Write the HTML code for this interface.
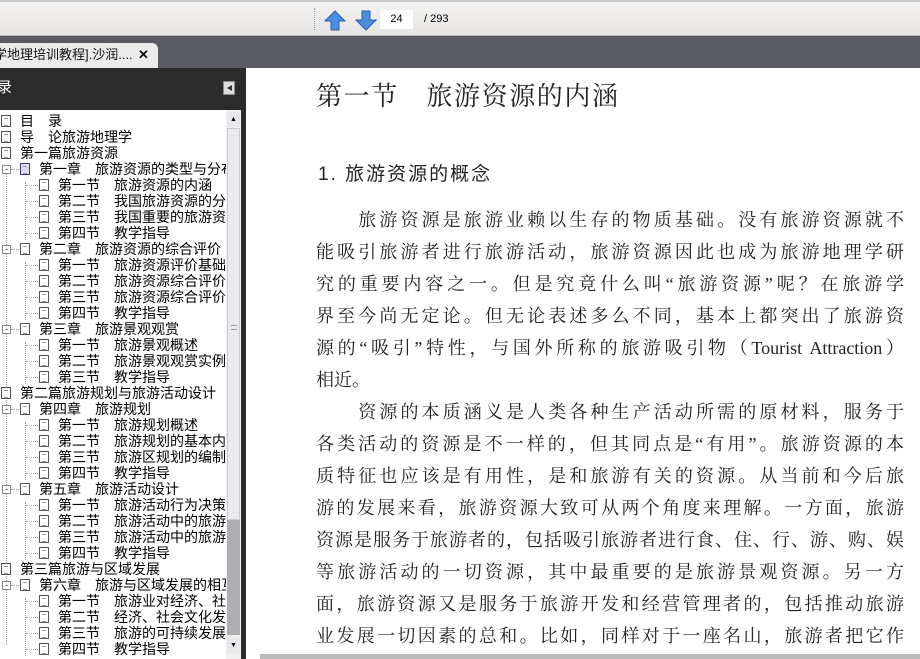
<!DOCTYPE html>
<html style="width:920px;height:659px;overflow:hidden"><head><meta charset="utf-8"><style>
*{margin:0;padding:0;box-sizing:border-box}
body{width:920px;height:659px;overflow:hidden;background:#fff;position:relative;font-family:"Liberation Sans","Noto Sans CJK SC",sans-serif}
#tb{position:absolute;left:0;top:0;width:920px;height:36px;background:linear-gradient(#f4f3f2,#e6e4e2);border-top:2px solid #c8c8c8;border-bottom:1px solid #b8b8b8}
#tabbar{position:absolute;left:0;top:36px;width:920px;height:32px;background:#5b5b63}
#tab{position:absolute;left:0;top:43px;width:158px;height:25px;background:#ecebea;border-radius:0 6px 0 0;font-size:13px;color:#111;line-height:23px;white-space:nowrap;overflow:hidden}
#side{position:absolute;left:0;top:68px;width:243px;height:591px;background:#2a2a2a}
#sh{position:absolute;left:0;top:68px;width:243px;height:42px;background:#2b2b2b;color:#fff;font-size:15px;line-height:40px}
#tree{position:absolute;left:0;top:110px;width:226px;height:549px;background:#fff;overflow:hidden}
.r{position:absolute;height:16px;font-size:14px;line-height:16px;white-space:nowrap;color:#000}
.ic{position:absolute;width:10px;height:12px;border:1px solid #555;background:#fff;top:2px}
.ic:after{content:"";position:absolute;left:2px;top:2px;width:4px;height:6px;border-top:1px solid #999;border-bottom:1px solid #999}
.ex{position:absolute;width:9px;height:9px;border:1px solid #888;top:4px;font-size:9px;line-height:7px;text-align:center;color:#000;background:#fff}
.dl{position:absolute;border-left:1px dotted #999}
#sb{position:absolute;left:226px;top:110px;width:15px;height:549px;background:#f0f0f0}
#sep{position:absolute;left:241px;top:68px;width:5px;height:591px;background:#2a2a2a}
#cont{position:absolute;left:246px;top:68px;width:674px;height:591px;background:#fff}
.p{position:absolute;left:316px;width:588px;font-family:"Liberation Serif","Noto Serif CJK SC",serif;font-size:18px;color:#222;text-align:justify;text-align-last:justify;white-space:nowrap;height:24px;line-height:24px}
</style></head><body>
<div id="tb">
<div style="position:absolute;left:314px;top:6px;height:22px;border-left:1px dotted #999"></div>
<svg style="position:absolute;left:324px;top:8px" width="22" height="22" viewBox="0 0 22 22"><path d="M11 1 L21 11 L15 11 L15 20 L7 20 L7 11 L1 11 Z" fill="#4a8fe0" stroke="#2a5ea8"/></svg>
<svg style="position:absolute;left:355px;top:7px" width="22" height="22" viewBox="0 0 22 22"><path d="M11 21 L21 11 L15 11 L15 2 L7 2 L7 11 L1 11 Z" fill="#4a8fe0" stroke="#2a5ea8"/></svg>
<div style="position:absolute;left:380px;top:8px;width:33px;height:19px;background:#fff;font-size:11px;line-height:19px;text-align:center">24</div>
<div style="position:absolute;left:424px;top:8px;font-size:11px;line-height:19px">/ 293</div>
</div>
<div id="tabbar"></div>
<div id="tab"><span style="margin-left:-6px">学地理培训教程].沙润....</span><span style="position:absolute;left:134px;top:0;font-weight:bold;background:#ecebea;padding:0 4px">✕</span></div>
<div id="side"></div>
<div id="sh"><span style="margin-left:-3px">录</span><div style="position:absolute;left:223px;top:13px;width:12px;height:14px;background:#ddd;border:1px solid #888"><div style="position:absolute;left:3px;top:3px;border-right:5px solid #333;border-top:3px solid transparent;border-bottom:3px solid transparent"></div></div></div>
<div id="tree">
<div class="dl" style="left:6px;top:64px;height:471px"></div>
<div class="dl" style="left:25px;top:72px;height:58px"></div>
<div class="dl" style="left:25px;top:152px;height:58px"></div>
<div class="dl" style="left:25px;top:232px;height:42px"></div>
<div class="dl" style="left:25px;top:312px;height:58px"></div>
<div class="dl" style="left:25px;top:392px;height:58px"></div>
<div class="dl" style="left:25px;top:488px;height:58px"></div>
<div id="rows"></div>
</div>
<div id="sb">
<div style="position:absolute;left:1px;top:2px;width:13px;height:15px;background:#e8e8ec;font-size:7px;text-align:center;line-height:15px">▲</div>
<div style="position:absolute;left:1px;top:18px;width:13px;height:392px;background:#ebebef;border:1px solid #ccc"><div style="position:absolute;left:3px;top:196px;width:6px;height:5px;border-top:1px solid #999;border-bottom:1px solid #999"></div></div>
<div style="position:absolute;left:1px;top:410px;width:13px;height:115px;background:#aeaeb2"></div>
<div style="position:absolute;left:1px;top:528px;width:13px;height:15px;background:#e8e8ec;font-size:7px;text-align:center;line-height:15px">▼</div>
</div>
<div id="sep"></div>
<div id="cont"></div>
<div style="position:absolute;left:316px;top:76px;font-family:'Liberation Serif','Noto Serif CJK SC',serif;font-size:26px;letter-spacing:1.6px;color:#222;white-space:nowrap">第一节　旅游资源的内涵</div>
<div style="position:absolute;left:318px;top:159px;font-family:'Liberation Sans','Noto Sans CJK SC',sans-serif;font-size:19px;letter-spacing:2px;color:#222;white-space:nowrap">1. 旅游资源的概念</div>
<div id="text"></div>
<div style="position:absolute;left:260px;top:654px;width:660px;height:5px;background:#bbb"></div>
<script>
var rows=[[0,"目　录"],[0,"导　论旅游地理学"],[0,"第一篇旅游资源"],[1,"第一章　旅游资源的类型与分布",1],[2,"第一节　旅游资源的内涵"],[2,"第二节　我国旅游资源的分布"],[2,"第三节　我国重要的旅游资源"],[2,"第四节　教学指导"],[1,"第二章　旅游资源的综合评价"],[2,"第一节　旅游资源评价基础"],[2,"第二节　旅游资源综合评价"],[2,"第三节　旅游资源综合评价"],[2,"第四节　教学指导"],[1,"第三章　旅游景观观赏"],[2,"第一节　旅游景观概述"],[2,"第二节　旅游景观观赏实例"],[2,"第三节　教学指导"],[0,"第二篇旅游规划与旅游活动设计"],[1,"第四章　旅游规划"],[2,"第一节　旅游规划概述"],[2,"第二节　旅游规划的基本内容"],[2,"第三节　旅游区规划的编制"],[2,"第四节　教学指导"],[1,"第五章　旅游活动设计"],[2,"第一节　旅游活动行为决策"],[2,"第二节　旅游活动中的旅游"],[2,"第三节　旅游活动中的旅游"],[2,"第四节　教学指导"],[0,"第三篇旅游与区域发展"],[1,"第六章　旅游与区域发展的相互"],[2,"第一节　旅游业对经济、社会"],[2,"第二节　经济、社会文化发展"],[2,"第三节　旅游的可持续发展"],[2,"第四节　教学指导"]];
var h="";rows.forEach(function(r,i){var y=3+16*i,l=r[0];
var ix=[1,20,39][l],tx=[20,39,58][l];
if(l==1)h+='<div class="ex" style="left:2px;top:'+(y+4)+'px">-</div>';
if(l==2)h+='<div style="position:absolute;left:26px;top:'+(y+8)+'px;width:12px;border-top:1px dotted #999"></div>';
if(l==1)h+='<div style="position:absolute;left:11px;top:'+(y+8)+'px;width:8px;border-top:1px dotted #999"></div>';
h+='<div class="ic" style="left:'+ix+'px;top:'+(y+2)+'px;'+(r[2]?'background:#dde;border-color:#33a':'')+'"></div>';
h+='<div class="r" style="left:'+tx+'px;top:'+y+'px">'+r[1]+'</div>';});
document.getElementById("rows").innerHTML=h;
var L=["　　旅游资源是旅游业赖以生存的物质基础。没有旅游资源就不","能吸引旅游者进行旅游活动，旅游资源因此也成为旅游地理学研","究的重要内容之一。但是究竟什么叫“旅游资源”呢？在旅游学","界至今尚无定论。但无论表述多么不同，基本上都突出了旅游资","源的“吸引”特性，与国外所称的旅游吸引物（Tourist Attraction）",null,"　　资源的本质涵义是人类各种生产活动所需的原材料，服务于","各类活动的资源是不一样的，但其同点是“有用”。旅游资源的本","质特征也应该是有用性，是和旅游有关的资源。从当前和今后旅","游的发展来看，旅游资源大致可从两个角度来理解。一方面，旅游","资源是服务于旅游者的，包括吸引旅游者进行食、住、行、游、购、娱","等旅游活动的一切资源，其中最重要的是旅游景观资源。另一方","面，旅游资源又是服务于旅游开发和经营管理者的，包括推动旅游","业发展一切因素的总和。比如，同样对于一座名山，旅游者把它作","它可作为游览观光对象等等，而旅游开发者则把它作为开发对象来"];
var t="";L.forEach(function(s,i){var y=208+32*i;if(s===null){t+='<div class="p" style="top:'+y+'px;text-align-last:left">相近。</div>';return;}
t+='<div class="p" style="top:'+y+'px">'+s+'</div>';});
document.getElementById("text").innerHTML=t;
</script>
</body></html>
